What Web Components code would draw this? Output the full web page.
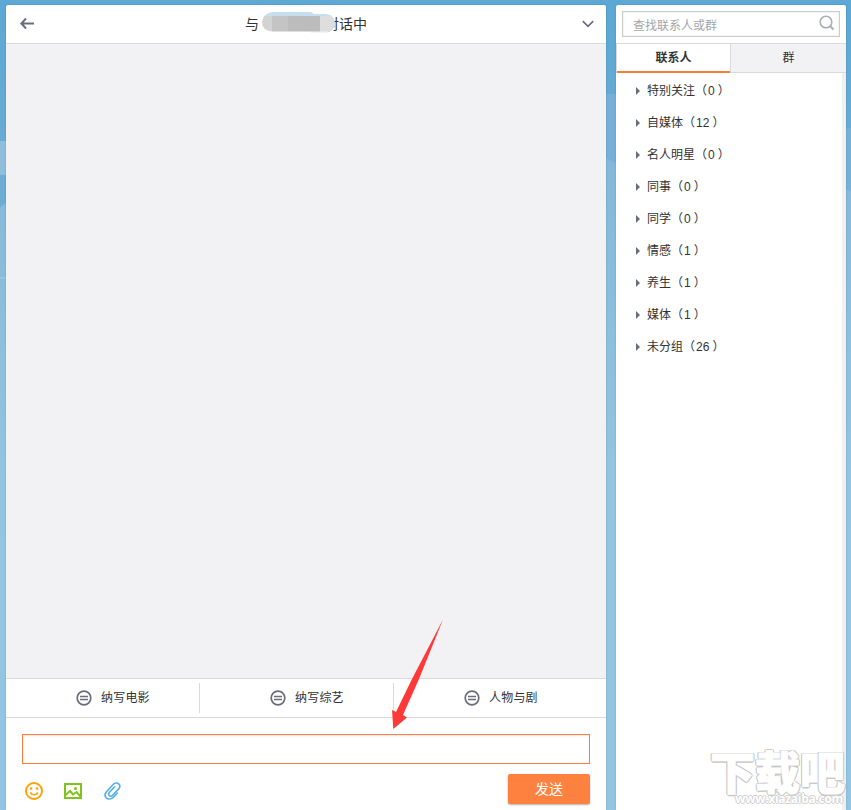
<!DOCTYPE html>
<html lang="zh-CN">
<head>
<meta charset="utf-8">
<title>私信</title>
<style>
  html, body { margin: 0; height: 100%; overflow: hidden; }
  body { font: 12px/16px "Liberation Sans", "Noto Sans CJK SC", sans-serif; color: #333; background: #94c5e2; }
</style>
</head>
<body>
<chat-app></chat-app>

<script>
/* Sky backdrop: gradient with flat cloud layers */
class SkyBackdrop extends HTMLElement {
  connectedCallback() {
    this.attachShadow({ mode: 'open' }).innerHTML = `
      <style>
        :host { position: absolute; inset: 0; z-index: -1; }
        svg { display: block; }
      </style>
      <svg width="851" height="810" viewBox="0 0 851 810" aria-hidden="true">
        <defs>
          <linearGradient id="sky" x1="0" y1="0" x2="0" y2="1">
            <stop offset="0" stop-color="#5ca8d4"/>
            <stop offset=".25" stop-color="#6cadd5"/>
            <stop offset="1" stop-color="#94c5e2"/>
          </linearGradient>
          <linearGradient id="haze" gradientUnits="userSpaceOnUse" x1="0" y1="160" x2="0" y2="600">
            <stop offset="0" stop-color="#84b8da"/>
            <stop offset=".7" stop-color="#93c4e1"/>
            <stop offset="1" stop-color="#94c5e2"/>
          </linearGradient>
        </defs>
        <rect width="851" height="810" fill="url(#sky)"/>
        <path d="M0 141H300V175H0z" fill="#8fbfdd"/>
        <path d="M500 94H700V200H500zM840 130l11-2v90h-11z" fill="#76b0d6"/>
        <path d="M0 207l6-4 40-20 500-30 60 5 10 5 220 20 15 9V810H0z" fill="url(#haze)"/>
        <path d="M0 278h6" stroke="#a8cee4"/>
      </svg>
    `;
  }
}
customElements.define('sky-backdrop', SkyBackdrop);

class ChatHeader extends HTMLElement {
  connectedCallback() {
    this.attachShadow({ mode: 'open' }).innerHTML = `
      <style>
        :host {
          display: flex;
          align-items: center;
          justify-content: space-between;
          height: 38px;
          padding: 0 12px 0 14px;
          border-bottom: 1px solid #d9d9de;
          background: #fff;
          border-radius: 2px 2px 0 0;
        }
        svg { display: block; }
        .title { display: flex; font-size: 14px; line-height: 20px; color: #333; margin-right: 5px; }
        .name { position: relative; width: 66px; }
        .mask { position: absolute; left: 3px; top: -3px; }
      </style>
      <svg width="15" height="13" viewBox="0 0 15 13" style="margin-top:-2px" fill="none" stroke="#696e7c" stroke-width="2">
        <path d="M6 1.5L1.3 6.5L6 11.5M1.5 6.5H14"/>
      </svg>
      <div class="title">
        <span>与</span>
        <span class="name">
          <svg class="mask" width="76" height="24" viewBox="0 0 76 24">
            <clipPath id="c"><path d="M11 1H49L52 3H64Q73 4 73 12Q73 20 64 22H49V20.500H10Q0 19.500 0 11Q1 2 11 1z"/></clipPath>
            <g clip-path="url(#c)">
              <path d="M0 0H76V5H0z" fill="#c6dfee"/>
              <path d="M0 5H10V24H0z" fill="#d3d3d3"/>
              <path d="M10 5H26V24H10z" fill="#c4c4c4"/>
              <path d="M26 5H58V24H26z" fill="#bcbcbc"/>
              <path d="M58 5H76V24H58z" fill="#dedede"/>
              <path d="M49 20.500H66V24H49z" fill="#f4f4f4"/>
            </g>
          </svg>
        </span>
        <span>对话中</span>
      </div>
      <svg width="12" height="8" viewBox="0 0 12 8" fill="none" stroke="#696e7c" stroke-width="1.700">
        <path d="M.8 1.200L6 6.400L11.200 1.200"/>
      </svg>
    `;
  }
}
customElements.define('chat-header', ChatHeader);

class MenuItem extends HTMLElement {
  connectedCallback() {
    this.attachShadow({ mode: 'open' }).innerHTML = `
      <style>
        :host {
          display: flex;
          align-items: center;
          gap: 9px;
          box-sizing: border-box;
          width: 194px;
          height: 30px;
          padding-left: 70px;
          border-right: 1px solid #d9d9de;
          letter-spacing: .2px;
          white-space: nowrap;
        }
        :host(:last-child) { border-right: 0; }
        svg { flex: none; margin-top: -1px; }
      </style>
      <svg width="16" height="16" viewBox="0 0 16 16" fill="none" stroke="#696e7c">
        <circle cx="8" cy="8" r="6.800" stroke-width="1.700"/>
        <path d="M4 6.500H12M4 9.500H12" stroke-width="1.600"/>
      </svg>
      <slot></slot>
    `;
  }
}
customElements.define('menu-item', MenuItem);

class ChatComposer extends HTMLElement {
  connectedCallback() {
    this.attachShadow({ mode: 'open' }).innerHTML = `
      <style>
        :host { display: block; padding: 16px 16px 0; height: 76px; background: #fff; }
        .input {
          display: block;
          box-sizing: border-box;
          width: 568px;
          height: 30px;
          margin: 0;
          padding: 4px 8px;
          border: 1px solid #ff7e3e;
          border-radius: 0;
          outline: 0;
          background: #fff;
          box-shadow: inset 0 1px 2px rgba(0,0,0,.1);
        }
        .bar { display: flex; align-items: center; height: 30px; margin-top: 10px; padding-left: 3px; }
        .bar svg { margin-top: 4px; flex: none; }
        .pic { margin-left: 21px; }
        .clip { margin-left: 22px; }
        button {
          width: 82px;
          height: 30px;
          margin-left: auto;
          padding: 0;
          border: 0;
          border-radius: 2px;
          background: #ff8140;
          box-shadow: 0 1px 2px rgba(0,0,0,.3);
          color: #fff;
          font: inherit;
          font-size: 14px;
        }
      </style>
      <input class="input" type="text" aria-label="message">
      <div class="bar">
        <svg width="18" height="18" viewBox="0 0 18 18" fill="none" stroke="#ffa00a" stroke-width="2">
          <circle cx="9" cy="9" r="8"/>
          <path d="M5 10.500Q9 15 13 10.500" stroke-width="1.700"/>
          <circle cx="6" cy="6.500" r="1.300" fill="#ffa00a" stroke="none"/>
          <circle cx="12" cy="6.500" r="1.300" fill="#ffa00a" stroke="none"/>
        </svg>
        <svg class="pic" width="18" height="16" viewBox="0 0 18 16" fill="none" stroke="#7fc31c" stroke-width="2">
          <path d="M1 1H17V15H1z"/>
          <path d="M1.500 12L6 8L9 11.500L12.500 9L16.500 13.500"/>
          <circle cx="11.500" cy="5.500" r="1.500" fill="#7fc31c" stroke="none"/>
        </svg>
        <svg class="clip" width="17" height="18" viewBox="0 0 17 18" fill="none" stroke="#52aeea" stroke-width="1.600" stroke-linecap="round">
          <path d="M13.500 11L9.200 15.400C7 17.500 4 17.500 2.300 15.900C.7 14.200.8 11.600 2.500 9.700L9.300 2.300C11 .6 13.300.5 14.700 1.900C16.100 3.200 16 5.400 14.500 7.100L8.600 13.300C7.600 14.300 6.100 14.400 5.200 13.500C4.300 12.600 4.500 11.300 5.400 10.300L10.600 4.900"/>
        </svg>
        <button type="button">发送</button>
      </div>
    `;
  }
}
customElements.define('chat-composer', ChatComposer);

class ContactGroup extends HTMLElement {
  connectedCallback() {
    this.attachShadow({ mode: 'open' }).innerHTML = `
      <style>
        :host { display: flex; align-items: center; height: 32px; padding-left: 20px; gap: 7px; white-space: nowrap; }
        svg { flex: none; }
        .count { margin: 0 3px 0 1px; }
      </style>
      <svg width="4" height="8" viewBox="0 0 4 8"><path d="M0 0L4 4L0 8z" fill="#696e7c"/></svg>
      <span><slot></slot>（<span class="count">${this.getAttribute('count')}</span>）</span>
    `;
  }
}
customElements.define('contact-group', ContactGroup);

class ContactPanel extends HTMLElement {
  connectedCallback() {
    this.attachShadow({ mode: 'open' }).innerHTML = `
      <style>
        :host {
          display: flex;
          flex-direction: column;
          width: 230px;
          background: #fff;
          border-radius: 2px 2px 0 0;
          box-shadow: 0 0 2px rgba(0,0,0,.2);
        }
        .search {
          display: flex;
          align-items: center;
          justify-content: space-between;
          box-sizing: border-box;
          height: 26px;
          margin: 6px;
          padding: 0 4px 0 10px;
          border: 1px solid #ccc;
          box-shadow: inset 0 0 2px rgba(0,0,0,.15);
          color: #a5a5a5;
        }
        .search span { padding-top: 4px; }
        .search svg { margin-top: -3px; }
        .tabs {
          display: flex;
          box-sizing: border-box;
          height: 30px;
          border: solid #d9d9de;
          border-width: 1px 0 0 1px;
          text-align: center;
          line-height: 29px;
        }
        .tab { box-sizing: border-box; flex: 1; border-bottom: 1px solid #d9d9de; background: #f2f2f5; border-left: 1px solid #d9d9de; }
        .tab.active { flex: none; width: 113px; background: #fff; border-left: 0; border-bottom: 2px solid #fa7d3c; font-weight: bold; }
        .list { flex: 1; padding-top: 2px; border-right: 4px solid #f0f0f2; }
      </style>
      <div class="search">
        <span>查找联系人或群</span>
        <svg width="16" height="16" viewBox="0 0 16 16" fill="none" stroke="#a9adb5" stroke-width="1.600">
          <circle cx="7" cy="7" r="5.800"/>
          <path d="M11 11L14.500 14.500" stroke-width="2"/>
        </svg>
      </div>
      <div class="tabs">
        <div class="tab active">联系人</div>
        <div class="tab">群</div>
      </div>
      <div class="list"><slot></slot></div>
    `;
  }
}
customElements.define('contact-panel', ContactPanel);

/* Site stamp in the corner, outlined lettering */
class SiteMark extends HTMLElement {
  connectedCallback() {
    this.attachShadow({ mode: 'open' }).innerHTML = `
      <style>
        :host {
          position: absolute;
          left: 710px;
          top: 749px;
          width: 135px;
          color: #fff;
          white-space: nowrap;
          pointer-events: none;
        }
        .big {
          font: 900 45px/44px "Noto Sans CJK SC", sans-serif;
          -webkit-text-stroke: 1px #fff;
          text-shadow: 1.500px 0 #c8c8c8, -1.500px 0 #c8c8c8, 0 1.500px #c8c8c8, 0 -1.500px #c8c8c8,
            1.200px 1.200px #c8c8c8, -1.200px -1.200px #c8c8c8, 1.200px -1.200px #c8c8c8, -1.200px 1.200px #c8c8c8;
        }
        .url {
          margin: -1px 2px 0 0;
          font: bold 12px/14px "Open Sans", sans-serif;
          letter-spacing: -.3px;
          text-align: right;
          text-shadow: 1px 0 #d0d0d0, -1px 0 #d0d0d0, 0 1px #d0d0d0, 0 -1px #d0d0d0;
        }
      </style>
      <div class="big">下载吧</div>
      <div class="url">www.xiazaiba.com</div>
    `;
  }
}
customElements.define('site-mark', SiteMark);

/* Red arrow that points at the message box */
class PointerArrow extends HTMLElement {
  connectedCallback() {
    this.attachShadow({ mode: 'open' }).innerHTML = `
      <style>
        :host { position: absolute; left: 390px; top: 618px; pointer-events: none; }
        svg { display: block; }
      </style>
      <svg width="56" height="114" viewBox="0 0 56 114">
        <path d="M53 1.500L22 61L6 94L2 92L3.300 111L17 99.500L13 97L29 61z" fill="#ff3838"/>
      </svg>
    `;
  }
}
customElements.define('pointer-arrow', PointerArrow);

class ChatApp extends HTMLElement {
  connectedCallback() {
    this.attachShadow({ mode: 'open' }).innerHTML = `
      <style>
        :host {
          position: relative;
          z-index: 0;
          display: flex;
          gap: 10px;
          box-sizing: border-box;
          height: 810px;
          width: 851px;
          padding: 5px 5px 0 6px;
          overflow: hidden;
        }
        .chat {
          display: flex;
          flex-direction: column;
          width: 600px;
          border-radius: 2px 2px 0 0;
          box-shadow: 0 0 2px rgba(0,0,0,.2);
        }
        .messages { flex: 1; background: #f2f2f5; }
        .menu {
          display: flex;
          align-items: center;
          height: 38px;
          border: solid #d9d9de;
          border-width: 1px 0;
          background: #fff;
        }
      </style>
      <sky-backdrop></sky-backdrop>
      <div class="chat">
        <chat-header></chat-header>
        <div class="messages"></div>
        <div class="menu">
          <menu-item>纳写电影</menu-item>
          <menu-item>纳写综艺</menu-item>
          <menu-item>人物与剧</menu-item>
        </div>
        <chat-composer></chat-composer>
      </div>
      <contact-panel>
        <contact-group count="0">特别关注</contact-group>
        <contact-group count="12">自媒体</contact-group>
        <contact-group count="0">名人明星</contact-group>
        <contact-group count="0">同事</contact-group>
        <contact-group count="0">同学</contact-group>
        <contact-group count="1">情感</contact-group>
        <contact-group count="1">养生</contact-group>
        <contact-group count="1">媒体</contact-group>
        <contact-group count="26">未分组</contact-group>
      </contact-panel>
      <site-mark></site-mark>
      <pointer-arrow></pointer-arrow>
    `;
  }
}
customElements.define('chat-app', ChatApp);
</script>
</body>
</html>
